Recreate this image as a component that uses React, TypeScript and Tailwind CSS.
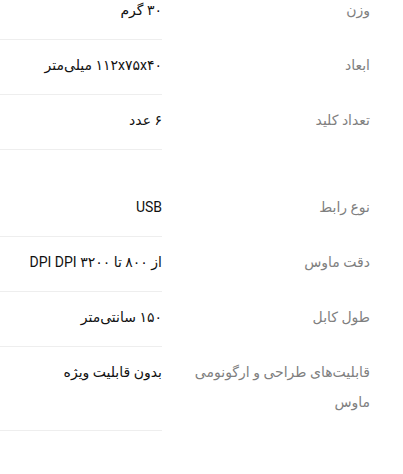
const specs = [
  { label: 'وزن', value: '۳۰ گرم' },
  { label: 'ابعاد', value: '۱۱۲x۷۵x۴۰ میلی‌متر' },
  { label: 'تعداد کلید', value: '۶ عدد' },
  { label: 'نوع رابط', value: 'USB', gap: true },
  { label: 'دقت ماوس', value: 'از ۸۰۰ تا ۳۲۰۰ DPI DPI' },
  { label: 'طول کابل', value: '۱۵۰ سانتی‌متر' },
  { label: 'قابلیت‌های طراحی و ارگونومی ماوس', value: 'بدون قابلیت ویژه' },
];

export default function App() {
  return (
    <div
      dir="rtl"
      className="w-[403px] h-[474px] overflow-hidden bg-white text-sm"
      style={{ fontFamily: 'Roboto, "DejaVu Sans", sans-serif' }}
    >
      <div className="-mt-[15px] flex flex-col">
        {specs.map((row, i) => (
          <div key={i} className={`flex ${row.gap ? 'pt-[32px]' : ''}`}>
            <div className="w-[241px] shrink-0 pt-[10px] pb-[14px] pr-[33px] pl-4 leading-[30px] text-[#7f7f7f]">
              {row.label}
            </div>
            <div className="flex-1 pt-[10px] pb-[14px] leading-[30px] text-[#111111] border-b border-[#eeeeee]">
              {row.value}
            </div>
          </div>
        ))}
      </div>
    </div>
  );
}
